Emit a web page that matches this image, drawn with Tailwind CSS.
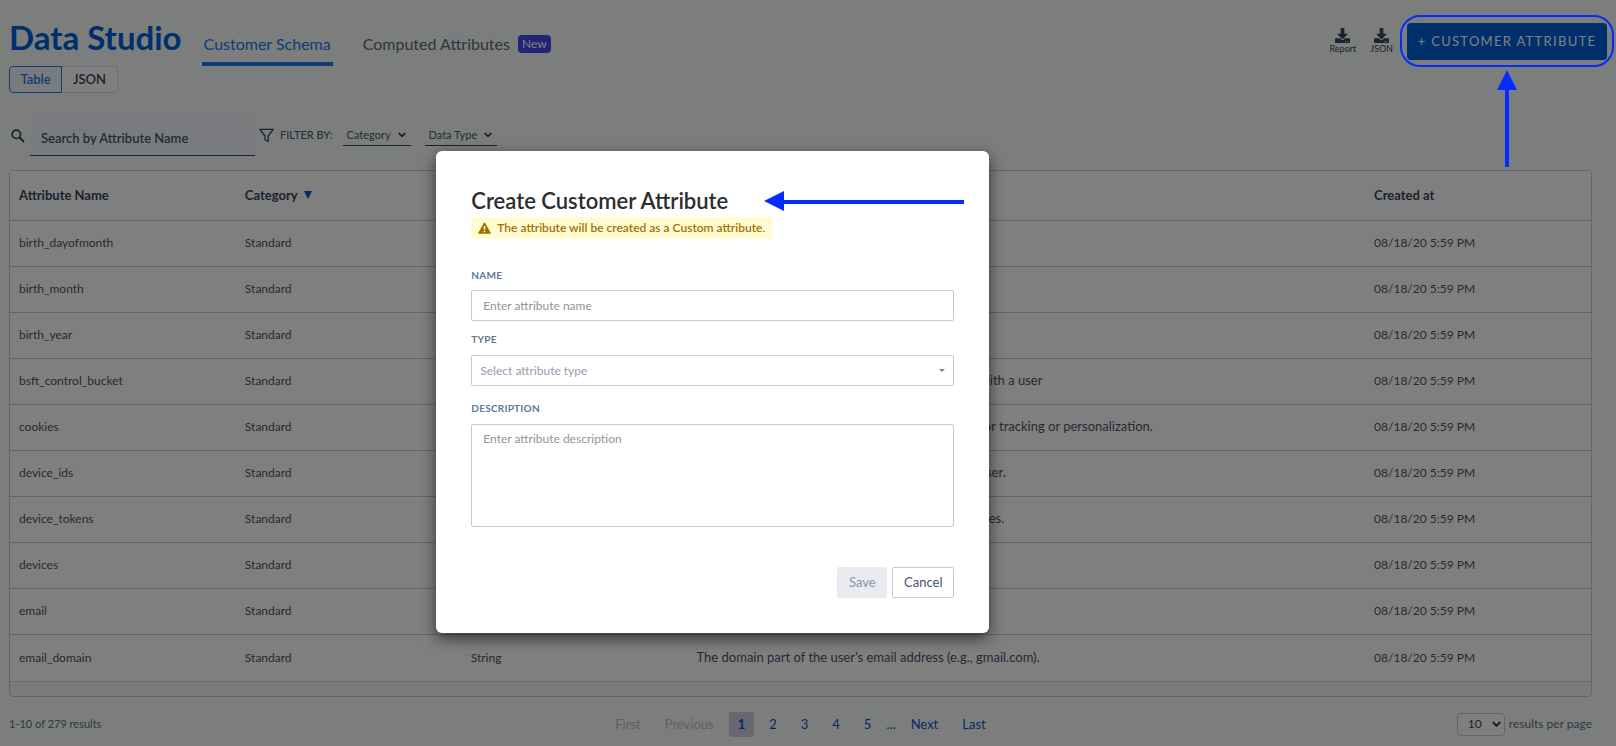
<!DOCTYPE html>
<html lang="en">
<head>
  <meta charset="UTF-8" />
  <title>Data Studio – Customer Schema</title>
  <meta name="viewport" content="width=device-width, initial-scale=1.0" />
  <script src="https://cdn.jsdelivr.net/npm/@tailwindcss/browser@4"></script>
</head>
<body class="relative min-h-screen bg-[#f9fcfa] font-[Lato,'Open_Sans',sans-serif] text-xs text-[#45566c]">

<!-- Header -->
<header class="flex items-start justify-between px-[9px] pt-[18px]">
  <div class="flex items-baseline">
    <h1 class="text-[33px] leading-[38px] font-bold text-[#0060d8]">Data Studio</h1>
    <nav class="ml-5 flex gap-[30px]">
      <a href="#" class="border-b-4 border-[#1f78f0] px-0.5 pb-1.5 text-base leading-6 text-[#1f78f0]">Customer Schema</a>
      <a href="#" class="flex items-center gap-2 border-b-4 border-transparent pb-1.5 text-base leading-6 text-[#5a6a80]">
        Computed Attributes
        <span class="rounded bg-[#4346f0] px-1 text-xs leading-[18px] text-white">New</span>
      </a>
    </nav>
  </div>

  <div class="mt-[5px] flex items-center gap-3.5">
    <button type="button" class="flex flex-col items-center">
      <svg class="h-[15px] w-[15px]" viewBox="0 0 512 512" fill="#33475b"><path d="M216 0h80c13 0 24 11 24 24v168h88c18 0 27 21 14 34L270 378c-8 8-20 8-28 0L90 226c-13-13-4-34 14-34h88V24c0-13 11-24 24-24zm296 376v112c0 13-11 24-24 24H24c-13 0-24-11-24-24V376c0-13 11-24 24-24h147l49 49c20 20 52 20 72 0l49-49h147c13 0 24 11 24 24zm-124 88c0-11-9-20-20-20s-20 9-20 20 9 20 20 20 20-9 20-20zm64 0c0-11-9-20-20-20s-20 9-20 20 9 20 20 20 20-9 20-20z"/></svg>
      <span class="text-[9px] leading-3 text-[#33475b]">Report</span>
    </button>
    <button type="button" class="flex flex-col items-center">
      <svg class="h-[15px] w-[15px]" viewBox="0 0 512 512" fill="#33475b"><path d="M216 0h80c13 0 24 11 24 24v168h88c18 0 27 21 14 34L270 378c-8 8-20 8-28 0L90 226c-13-13-4-34 14-34h88V24c0-13 11-24 24-24zm296 376v112c0 13-11 24-24 24H24c-13 0-24-11-24-24V376c0-13 11-24 24-24h147l49 49c20 20 52 20 72 0l49-49h147c13 0 24 11 24 24zm-124 88c0-11-9-20-20-20s-20 9-20 20 9 20 20 20 20-9 20-20zm64 0c0-11-9-20-20-20s-20 9-20 20 9 20 20 20 20-9 20-20z"/></svg>
      <span class="text-[9px] leading-3 text-[#33475b]">JSON</span>
    </button>
    <button type="button" class="h-[37px] w-[200px] rounded bg-[#0060d8] text-[13px] tracking-widest whitespace-nowrap text-white">+ CUSTOMER ATTRIBUTE</button>
  </div>
</header>

<main class="pr-6 pl-[9px]">
  <!-- View toggle -->
  <div class="flex h-[27px] text-[13px] font-semibold">
    <button type="button" class="w-[53px] rounded-l border border-[#1f78f0] bg-[#f3f7ff] text-[#1f78f0]">Table</button>
    <button type="button" class="w-14 rounded-r border border-l-0 border-[#dcdfe6] bg-white text-[#33475b]">JSON</button>
  </div>

  <!-- Search and filters -->
  <div class="mt-6 flex items-center">
    <label for="search" class="mr-[5px] ml-0.5 pb-0.5">
      <svg class="h-3.5 w-3.5" viewBox="0 0 14 14" fill="none" stroke="#33475b"><circle cx="5.3" cy="5.3" r="4.2" stroke-width="1.7"/><path d="M8.3 8.3l4.7 4.7" stroke-width="2"/></svg>
    </label>
    <input id="search" type="text" placeholder="Search by Attribute Name" class="h-[39px] w-[225px] border-b border-[#33475b] bg-[#f5f6fc] px-[11px] pt-1 text-[13px] font-semibold outline-none placeholder:text-[#45566c]" />
    <div class="flex items-center pb-0.5">
      <svg class="ml-1 h-[15px] w-[15px]" viewBox="0 0 15 15" fill="none" stroke="#33475b" stroke-width="1.3" stroke-linejoin="round"><path d="M.8 1.3h13.4L9.2 8v5.5L6 11.8V8z"/></svg>
      <span class="ml-1.5 text-[11px]">FILTER BY:</span>
      <div class="relative ml-2.5">
        <select aria-label="Category" class="h-5 w-[68px] appearance-none border-b border-[#33475b] px-1 text-[11px] outline-none"><option>Category</option></select>
        <svg class="pointer-events-none absolute top-[6px] right-[5px] h-[6px] w-2" viewBox="0 0 8 6" fill="none" stroke="#33475b" stroke-width="1.8"><path d="M.7 1l3.3 3.3L7.3 1"/></svg>
      </div>
      <div class="relative ml-3.5">
        <select aria-label="Data type" class="h-5 w-[72px] appearance-none border-b border-[#33475b] px-1 text-[11px] outline-none"><option>Data Type</option></select>
        <svg class="pointer-events-none absolute top-[6px] right-[5px] h-[6px] w-2" viewBox="0 0 8 6" fill="none" stroke="#33475b" stroke-width="1.8"><path d="M.7 1l3.3 3.3L7.3 1"/></svg>
      </div>
    </div>
  </div>

  <!-- Attributes table -->
  <div class="mt-3.5 overflow-hidden rounded border border-[#c9cbd8] bg-[#f7f7f7] pb-[14px]">
    <table class="w-full table-fixed bg-white text-left">
      <thead>
        <tr class="h-[49px] border-b border-[#c9cbd8] text-[13px] font-bold text-[#33475b]">
          <th class="w-1/7 pl-[9px]">Attribute Name</th>
          <th class="w-1/7 pl-[9px]">
            <span class="flex items-center gap-1.5">Category
              <svg class="h-2 w-2" viewBox="0 0 8 8" fill="#0060d8"><path d="M0 0h8L4 8z"/></svg>
            </span>
          </th>
          <th class="w-1/7 pl-[9px]" aria-label="Data Type"></th>
          <th class="w-3/7 pl-[9px]" aria-label="Description"></th>
          <th class="w-1/7 pl-[9px]">Created at</th>
        </tr>
      </thead>
      <tbody id="attributeRows"></tbody>
    </table>
  </div>

  <!-- Pagination -->
  <footer class="mt-[15px] grid grid-cols-[1fr_auto_1fr] items-center text-[#5f7086]">
    <span class="text-[11px]">1-10 of 279 results</span>
    <nav class="flex items-center gap-1.5 text-[13px] leading-[25px] text-[#0057c2]">
      <a href="#" class="px-[9px] text-[#bcc0cb]">First</a>
      <a href="#" class="px-[9px] text-[#bcc0cb]">Previous</a>
      <a href="#" class="rounded-xs bg-[#cfd1de] px-[9px] font-bold">1</a>
      <a href="#" class="px-[9px]">2</a>
      <a href="#" class="px-[9px]">3</a>
      <a href="#" class="px-[9px]">4</a>
      <a href="#" class="px-[9px]">5</a>
      <span>...</span>
      <a href="#" class="px-[9px]">Next</a>
      <a href="#" class="px-[9px]">Last</a>
    </nav>
    <div class="flex items-center justify-end gap-1">
      <div class="relative">
        <select id="pageSize" class="h-[23px] w-12 appearance-none rounded border border-[#c9cbd8] bg-white pl-2.5 text-xs text-[#33475b] outline-none"><option>10</option></select>
        <svg class="pointer-events-none absolute top-2 right-1 h-[7px] w-[9px]" viewBox="0 0 9 7" fill="none" stroke="#33475b" stroke-width="2"><path d="M.7 1l3.8 3.8L8.3 1"/></svg>
      </div>
      <label for="pageSize">results per page</label>
    </div>
  </footer>
</main>

<!-- Modal -->
<div class="absolute inset-0 bg-black/50 pt-[151px] pl-[27%]">
  <form role="dialog" aria-labelledby="modalTitle" class="relative flex w-[553px] flex-col rounded-md bg-white p-[35px] shadow-[0_5px_15px_rgba(0,0,0,0.6)]">
    <h2 id="modalTitle" class="text-[22px] leading-[30px] font-semibold text-[#2b2d2f]">Create Customer Attribute</h2>
    <p class="mt-px flex h-[22px] items-center gap-1.5 self-start rounded bg-[#fffcd2] px-[7px] pb-px text-xs font-semibold text-[#a66f00]">
      <svg class="h-3 w-[13px]" viewBox="0 0 13 12"><path d="M6.5 .7l5.9 10.5H.6z" fill="#a66f00" stroke="#a66f00" stroke-linejoin="round"/><path d="M6.5 4v3.7M6.5 8.7v1.5" stroke="#fffcd2" stroke-width="1.5"/></svg>
      The attribute will be created as a Custom attribute.
    </p>

    <label for="name" class="mt-7 mb-[7px] text-[10px] leading-4 font-bold tracking-wide text-[#5b7996]">NAME</label>
    <input id="name" type="text" placeholder="Enter attribute name" class="h-[31px] rounded-xs border border-[#c5c9d6] px-[11px] text-xs outline-none placeholder:text-[#949494]" />

    <label for="type" class="mt-2.5 mb-2 text-[10px] leading-4 font-bold tracking-wide text-[#5b7996]">TYPE</label>
    <div class="relative">
      <select id="type" class="h-[31px] w-full appearance-none rounded-xs border border-[#c5c9d6] px-2 text-xs text-[#969cae] outline-none"><option>Select attribute type</option></select>
      <svg class="pointer-events-none absolute top-3.5 right-[9px] h-[3px] w-1.5" viewBox="0 0 6 3" fill="#858585"><path d="M0 0h6L3 3z"/></svg>
    </div>

    <label for="description" class="mt-3.5 mb-2 text-[10px] leading-4 font-bold tracking-wide text-[#5b7996]">DESCRIPTION</label>
    <textarea id="description" placeholder="Enter attribute description" class="h-[103px] resize-none rounded-xs border border-[#c5c9d6] px-[11px] py-1.5 text-xs outline-none placeholder:text-[#949494]"></textarea>

    <div class="mt-10 flex h-[31px] justify-end gap-[5px] text-[13px]">
      <button type="submit" disabled class="w-[50px] rounded-xs bg-[#e9ebf0] text-[#8797a6]">Save</button>
      <button type="button" class="w-[62px] rounded-xs border border-[#c5c9d6] text-[#45566c]">Cancel</button>
    </div>

    <!-- Arrow to the modal title -->
    <svg class="absolute top-10 left-[328px] h-5 w-[200px]" viewBox="0 0 200 20" fill="#052cff"><path d="M0 10L20 0v9h180v4H20v7z"/></svg>
  </form>
</div>

<!-- Callout round the create button -->
<div class="absolute top-[15px] right-0.5 h-[52px] w-[214px] rounded-[20px] border-2 border-[#052cff]"></div>
<svg class="absolute top-[70px] right-[99px] h-[97px] w-5" viewBox="0 0 20 97" fill="#052cff"><path d="M10 0l10 20h-8v77H8V20H0z"/></svg>

<script>
  const attributes = [
    { name: "birth_dayofmonth" },
    { name: "birth_month" },
    { name: "birth_year" },
    { name: "bsft_control_bucket", description: "The number of a control bucket that is associated with a user" },
    { name: "cookies", description: "All of the web cookies that were stored for a user for tracking or personalization." },
    { name: "device_ids", description: "The list of all the device IDs that are linked to the user." },
    { name: "device_tokens", description: "The list of the push tokens for all of the user's devices." },
    { name: "devices" },
    { name: "email" },
    { name: "email_domain", type: "String", description: "The domain part of the user’s email address (e.g., gmail.com)." }
  ];

  const rows = document.getElementById("attributeRows");

  attributes.forEach((attribute, i) => {
    const row = document.createElement("tr");
    row.className = i === attributes.length - 1
      ? "h-[47px] border-b border-[#dcdde3]"
      : "h-[46px] border-b border-[#c9cbd8]";

    [attribute.name, "Standard", attribute.type || "", attribute.description || "", "08/18/20 5:59 PM"].forEach((text, column) => {
      const cell = document.createElement("td");
      cell.className = "pl-[9px] whitespace-nowrap " + (column === 3 ? "text-[13px]" : "text-xs");
      cell.textContent = text;
      row.appendChild(cell);
    });

    rows.appendChild(row);
  });
</script>

</body>
</html>
